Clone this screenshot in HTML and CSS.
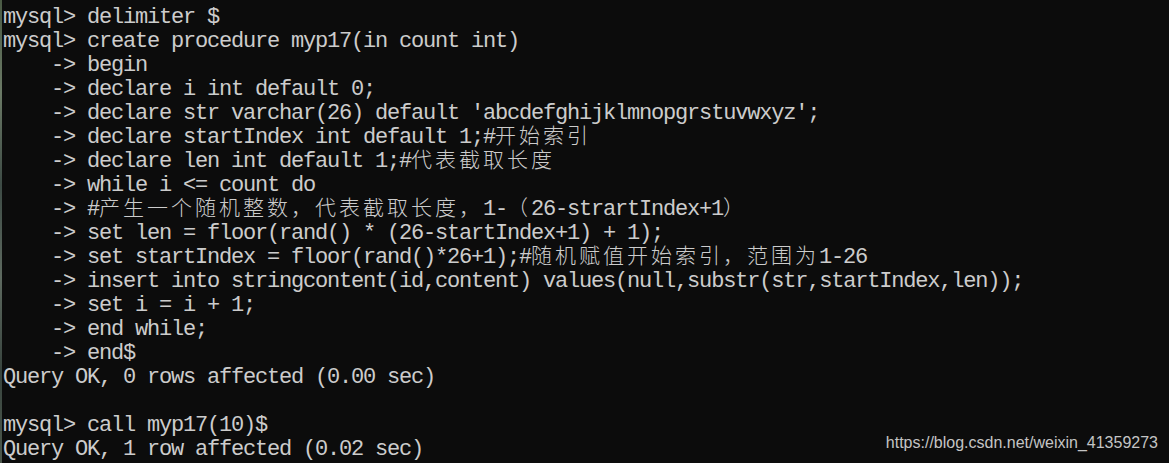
FILE: index.html
```html
<!DOCTYPE html>
<html lang="zh-CN">
<head>
<meta charset="utf-8">
<title>mysql</title>
<link rel="stylesheet" href="styles.css">
</head>
<body>
<div class="console">
<div class="edge"></div>
<div class="screen">
<div class="line">mysql&gt; delimiter $</div>
<div class="line">mysql&gt; create procedure myp17(in count int)</div>
<div class="line">    -&gt; begin</div>
<div class="line">    -&gt; declare i int default 0;</div>
<div class="line">    -&gt; declare str varchar(26) default 'abcdefghijklmnopgrstuvwxyz';</div>
<div class="line">    -&gt; declare startIndex int default 1;#<span class="cjk">开始索引</span></div>
<div class="line">    -&gt; declare len int default 1;#<span class="cjk">代表截取长度</span></div>
<div class="line">    -&gt; while i &lt;= count do</div>
<div class="line">    -&gt; #<span class="cjk">产生一个随机整数，代表截取长度，</span>1-<span class="cjk">（</span>26-strartIndex+1<span class="cjk">）</span></div>
<div class="line">    -&gt; set len = floor(rand() * (26-startIndex+1) + 1);</div>
<div class="line">    -&gt; set startIndex = floor(rand()*26+1);#<span class="cjk">随机赋值开始索引，范围为</span>1-26</div>
<div class="line">    -&gt; insert into stringcontent(id,content) values(null,substr(str,startIndex,len));</div>
<div class="line">    -&gt; set i = i + 1;</div>
<div class="line">    -&gt; end while;</div>
<div class="line">    -&gt; end$</div>
<div class="line">Query OK, 0 rows affected (0.00 sec)</div>
<div class="line"></div>
<div class="line">mysql&gt; call myp17(10)$</div>
<div class="line">Query OK, 1 row affected (0.02 sec)</div>
</div>
<div class="watermark">https://blog.csdn.net/weixin_41359273</div>
</div>
</body>
</html>
```
FILE: styles.css
```css
html, body {
  margin: 0;
  padding: 0;
  background: #0c0c0c;
}
.console {
  position: relative;
  display: flex;
  width: 1169px;
  height: 463px;
  overflow: hidden;
  background: #0c0c0c;
}
.edge {
  flex: 0 0 2px;
  background: linear-gradient(180deg, #4a5a44 0%, #6b7a66 20%, #3d4b45 40%, #5e6a60 60%, #38443e 80%, #4c584c 100%);
}
.screen {
  flex: 1;
  padding: 6px 0 0 1px;
  color: #cccccc;
  font-family: "Liberation Mono", "Noto Sans CJK SC", monospace;
  font-size: 22px;
  letter-spacing: -1.2px;
}
.line {
  height: 24px;
  line-height: 24px;
  white-space: pre;
}
.cjk {
  font-family: "Noto Sans CJK SC", sans-serif;
  font-size: 21px;
  letter-spacing: 3px;
  line-height: 16px;
  font-weight: 300;
}
.watermark {
  position: absolute;
  right: 11px;
  bottom: 11px;
  font-family: "Liberation Sans", Arial, sans-serif;
  font-size: 16px;
  color: #c4c4c4;
}
```
